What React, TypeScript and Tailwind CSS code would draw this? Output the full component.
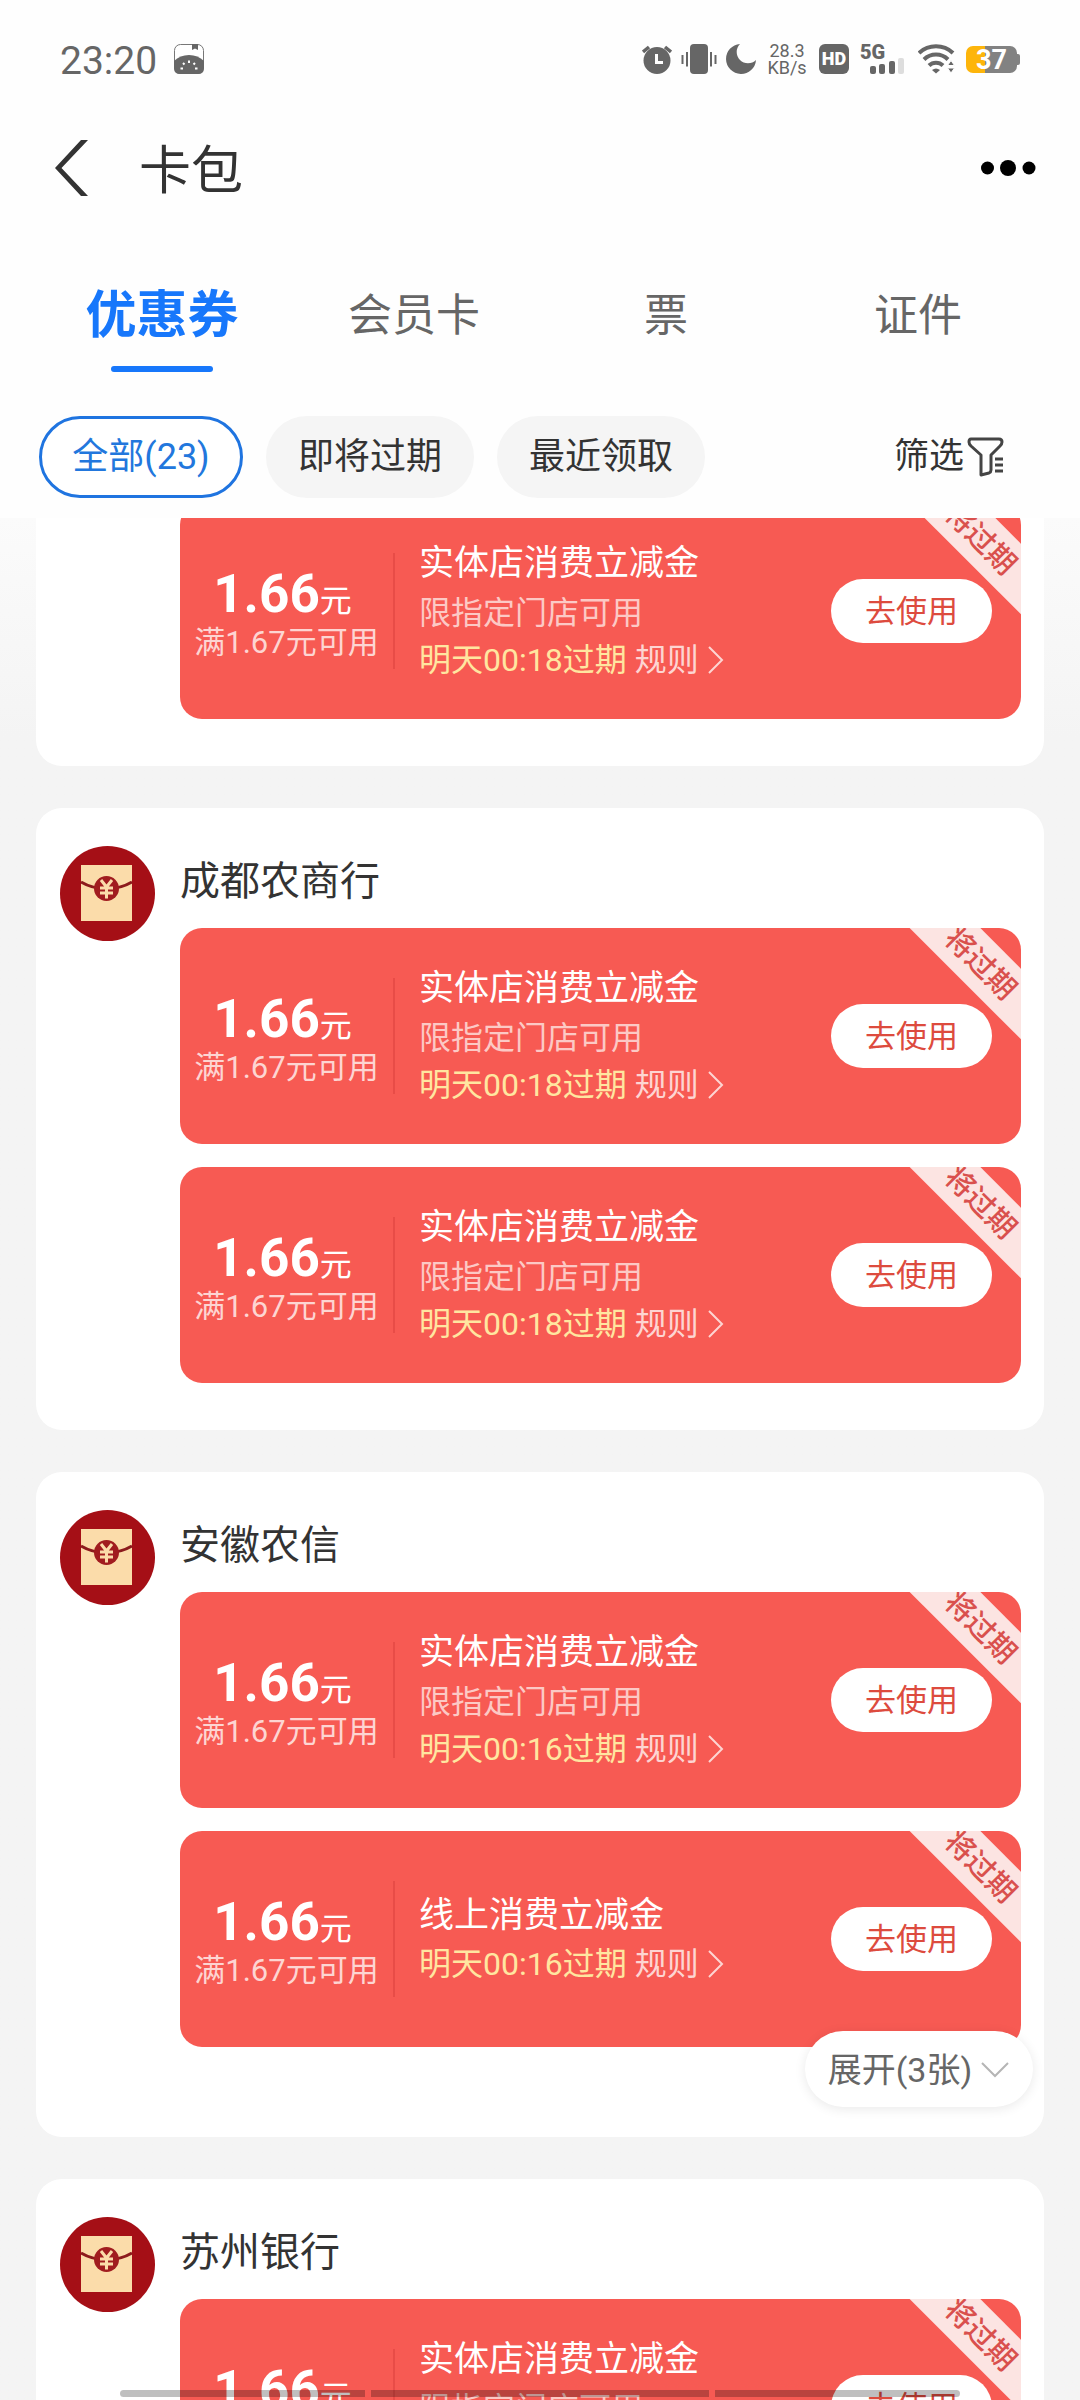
import React from "react";

type Coupon = { title: string; scope?: string; expiry: string };
type Group = { name: string; coupons: Coupon[]; more?: number };

const store = "实体店消费立减金";
const scope = "限指定门店可用";

const groups: Group[] = [
  {
    name: "成都农商行",
    coupons: [
      { title: store, scope, expiry: "明天00:18过期" },
      { title: store, scope, expiry: "明天00:18过期" },
    ],
  },
  {
    name: "安徽农信",
    coupons: [
      { title: store, scope, expiry: "明天00:16过期" },
      { title: "线上消费立减金", expiry: "明天00:16过期" },
    ],
    more: 3,
  },
  { name: "苏州银行", coupons: [{ title: store, scope, expiry: "明天00:16过期" }] },
];

function StatusBar() {
  return (
    <div className="flex h-[118px] shrink-0 items-center justify-between px-[60px] text-[#666]">
      <div className="flex items-center gap-[17px]">
        <span className="pt-[3px] text-[39px] leading-[40px]">23:20</span>
        <svg width="30" height="30" viewBox="0 0 30 30" aria-hidden="true">
          <rect x="0.5" y="0.5" width="29" height="29" rx="6" fill="#fff" stroke="#777" />
          <path d="M0 17C4 13 9 11 15 11S26 13 30 17V24Q30 30 24 30H6Q0 30 0 24Z" fill="#666" />
          <path d="M18 0H24V6L21 4.500L18 6Z" fill="#666" />
          <path d="M15 16.500V19M9 19L10.500 20.500M21 19L19.500 20.500M6.500 24.500H9M21 24.500H23.500" stroke="#fff" strokeWidth="2" />
        </svg>
      </div>
      <div className="flex items-center">
        <svg width="30" height="30" viewBox="0 0 30 30" aria-hidden="true">
          <circle cx="15" cy="16.500" r="13.500" fill="#666" />
          <path d="M1 8L7 3M29 8L23 3" stroke="#666" strokeWidth="3.500" />
          <path d="M14.500 10V18.500H21" stroke="#fff" strokeWidth="3" fill="none" />
        </svg>
        <svg className="ml-[9px]" width="36" height="30" viewBox="0 0 36 30" aria-hidden="true">
          <rect x="9" width="18" height="30" rx="4" fill="#666" />
          <path d="M1.500 11V20M6 8V22.500M30 8V22.500M34.500 11V20" stroke="#666" strokeWidth="2" />
        </svg>
        <svg className="ml-[9px]" width="30" height="30" viewBox="0 0 30 30" aria-hidden="true">
          <path d="M14 0A10.500 10.500 0 0 0 30 16A15 15 0 1 1 14 0Z" fill="#666" />
        </svg>
        <div className="ml-[11px] w-[40px] text-center text-[18px] leading-[17px]">
          <div>28.3</div>
          <div>KB/s</div>
        </div>
        <div className="ml-[12px] flex h-[30px] w-[30px] items-center justify-center rounded-[6px] bg-[#666] text-[18px] leading-[30px] font-black text-white">
          HD
        </div>
        <svg className="-mt-[10px] ml-[11px]" width="46" height="40" viewBox="0 -10 46 40" aria-hidden="true">
          <text x="0" y="15" fontSize="20" fontWeight="900" fill="#666">5G</text>
          <rect x="10" y="22" width="6" height="8" rx="2" fill="#666" />
          <rect x="19" y="20" width="6" height="10" rx="2" fill="#666" />
          <rect x="29" y="17" width="6" height="13" rx="2" fill="#666" />
          <rect x="38" y="14" width="6" height="16" rx="2" fill="#ddd" />
        </svg>
        <svg className="ml-[12px]" width="38" height="30" viewBox="0 0 38 30" aria-hidden="true">
          <g fill="none" stroke="#666" strokeWidth="4">
            <path d="M1 9A25 25 0 0 1 35 9" />
            <path d="M6 15.500A17 17 0 0 1 30 15.500" />
            <path d="M11 21.500A10 10 0 0 1 25 21.500" />
          </g>
          <path d="M18 29.500L14 26Q18 23 22 26Z" fill="#666" />
          <path d="M29.500 21.500L33 16.500L36.500 21.500ZM29.500 24L33 29L36.500 24Z" fill="#666" stroke="#fefefe" strokeWidth="1" />
        </svg>
        <div className="ml-[10px] flex items-center">
          <div className="flex h-[27px] w-[51px] items-center justify-center rounded-[7px] bg-linear-to-r from-[#fdb50b] from-38% to-[#828282] to-38% pt-[2px] text-[27px] leading-[25px] font-bold text-white">
            37
          </div>
          <div className="h-[11px] w-[3px] rounded-r-[2px] bg-[#828282]" />
        </div>
      </div>
    </div>
  );
}

function Avatar() {
  return (
    <svg width="95" height="95" viewBox="0 0 95 95" className="shrink-0" aria-hidden="true">
      <circle cx="47.500" cy="47.500" r="47.500" fill="#a50f16" />
      <rect x="21" y="19" width="51" height="56" fill="#fbdcaa" />
      <path d="M21 36Q32 42.500 46.500 43Q61 42.500 72 36" fill="none" stroke="#8c1a1c" strokeWidth="3" />
      <circle cx="46.500" cy="42.500" r="12.500" fill="#a11c1f" />
      <path d="M41 34L46.500 41L52 34M46.500 41V52.500M40 42H53M40 47H53" fill="none" stroke="#fbdcaa" strokeWidth="3" />
    </svg>
  );
}

function CouponCard({ coupon }: { coupon: Coupon }) {
  return (
    <article className="relative flex h-[216px] items-center overflow-hidden rounded-[22px] bg-[#f75a53] pr-[29px] text-white">
      <div className="w-[213px] shrink-0 text-center whitespace-nowrap">
        <div className="pt-[10px] pr-2 text-[32px] leading-[46px]">
          <span className="text-[53px] font-bold">1.66</span>元
        </div>
        <div className="text-[31px] leading-[38px] text-[#fdd5d2]">满1.67元可用</div>
      </div>
      <div className="h-[116px] w-[2px] shrink-0 bg-[#e84c47]" />
      <div className="min-w-0 flex-1 pb-1 pl-6 text-[32px]">
        <h3 className="pt-[4px] text-[35px] leading-[50px]">{coupon.title}</h3>
        {coupon.scope && <p className="leading-[48px] text-[#fcc9c5]">{coupon.scope}</p>}
        <p className="flex items-center leading-[46px]">
          <span className="text-[#ffe6a0]">{coupon.expiry}</span>
          <a href="#rules" className="ml-2 flex items-center gap-2 text-[#fdd5d2]">
            规则
            <svg width="17" height="28" viewBox="0 0 17 28" aria-hidden="true">
              <path d="M2 1L15 14L2 27" fill="none" stroke="currentColor" strokeWidth="2" />
            </svg>
          </a>
        </p>
      </div>
      <div className="absolute top-[12px] right-[-61px] h-[50px] w-[200px] rotate-45 bg-[#fce4e2] pr-1 text-center text-[29px] leading-[50px] font-medium text-[#d9504d]">
        将过期
      </div>
      <button type="button" className="relative h-[64px] w-[161px] shrink-0 rounded-full bg-white pt-[2px] text-[31px] text-[#dd4b3e]">
        去使用
      </button>
    </article>
  );
}

function GroupCard({ group }: { group: Group }) {
  return (
    <section
      className={
        group.more
          ? "relative flex items-start rounded-[26px] bg-white pt-[38px] pr-[23px] pb-[90px] pl-[24px]"
          : "relative flex items-start rounded-[26px] bg-white pt-[38px] pr-[23px] pb-[47px] pl-[24px]"
      }
    >
      <Avatar />
      <div className="ml-[25px] min-w-0 flex-1">
        <h2 className="h-[82px] text-[40px] leading-[71px] text-[#333]">{group.name}</h2>
        <div className="flex flex-col gap-[23px]">
          {group.coupons.map((c, i) => (
            <CouponCard key={i} coupon={c} />
          ))}
        </div>
      </div>
      {group.more && (
        <button
          type="button"
          className="absolute right-[11px] bottom-[30px] flex h-[76px] w-[228px] items-center justify-center gap-2 rounded-full bg-white pt-[2px] text-[34px] text-[#666] shadow-[0_2px_12px_rgba(0,0,0,0.09)]"
        >
          展开({group.more}张)
          <svg width="30" height="18" viewBox="0 0 30 18" aria-hidden="true">
            <path d="M2 2L15 15L28 2" fill="none" stroke="#b5b5b5" strokeWidth="2" />
          </svg>
        </button>
      )}
    </section>
  );
}

export default function App() {
  const tabs = ["会员卡", "票", "证件"];
  return (
    <div className="relative flex h-screen flex-col overflow-hidden bg-[#fefefe] font-[Roboto,'Noto_Sans_CJK_SC',sans-serif]">
      <StatusBar />
      <header className="flex h-[100px] shrink-0 items-center pr-[44px] pl-[54px]">
        <button type="button" aria-label="返回">
          <svg width="36" height="56" viewBox="0 0 36 56" aria-hidden="true">
            <path d="M27 0H34L7.500 28L34 56H27L1 28Z" fill="#333" />
          </svg>
        </button>
        <h1 className="ml-[49px] flex-1 pt-[8px] text-[52px] leading-[72px] text-[#333]">卡包</h1>
        <button type="button" aria-label="更多">
          <svg width="56" height="16" viewBox="0 0 56 16" aria-hidden="true">
            <circle cx="7.500" cy="8" r="6.500" />
            <circle cx="28" cy="8" r="8" />
            <circle cx="49" cy="8" r="6.500" />
          </svg>
        </button>
      </header>
      <nav className="grid h-[154px] shrink-0 grid-cols-4 px-9 pt-[61px] text-[44px] leading-[74px] text-[#666]">
        <button type="button" className="flex flex-col items-center font-bold text-[#1777fb]">
          <span className="text-[51px]">优惠券</span>
          <span className="mt-[13px] h-[6px] w-[102px] rounded-full bg-[#1777fb]" />
        </button>
        {tabs.map((t) => (
          <button type="button" key={t} className="self-start">
            {t}
          </button>
        ))}
      </nav>
      <div className="flex h-[146px] shrink-0 items-center gap-[23px] pt-[24px] pr-[76px] pl-[39px] text-[36px] text-[#333]">
        <button type="button" className="h-[82px] w-[204px] rounded-full border-[3px] border-[#1f74e0] bg-white text-[#2277dd]">
          全部(23)
        </button>
        <button type="button" className="h-[82px] w-[208px] rounded-full bg-[#f5f5f5]">
          即将过期
        </button>
        <button type="button" className="h-[82px] w-[208px] rounded-full bg-[#f5f5f5]">
          最近领取
        </button>
        <button type="button" className="ml-auto flex items-center gap-[3px] text-[35px]">
          筛选
          <svg width="37" height="40" viewBox="0 0 37 40" aria-hidden="true">
            <path d="M4 2H32Q35 2 35 5Q35 7 33 9L24 18V33Q24 35 22 36L14 38V18L4 9Q2 7 2 5Q2 2 4 2Z" fill="none" stroke="#444" strokeWidth="3" strokeLinejoin="round" />
            <path d="M28 22H36M28 28H36M28 34H36" stroke="#444" strokeWidth="3" />
          </svg>
        </button>
      </div>
      <main className="flex min-h-0 flex-1 flex-col gap-[42px] overflow-y-auto bg-linear-to-b from-[#fbfbfb] to-[#f4f4f4] to-[220px] px-9 [scrollbar-width:none]">
        <section className="shrink-0 rounded-b-[26px] bg-white pr-[23px] pb-[47px] pl-[144px]">
          <div className="-mt-[15px]">
            <CouponCard coupon={{ title: store, scope, expiry: "明天00:18过期" }} />
          </div>
        </section>
        {groups.map((g) => (
          <GroupCard key={g.name} group={g} />
        ))}
      </main>
      <div className="absolute inset-x-[120px] bottom-[3px] flex h-[7px] gap-[6px] overflow-hidden rounded-full">
        <span className="flex-[245] bg-black/25" />
        <span className="flex-[338] bg-black/25" />
        <span className="flex-[245] bg-black/25" />
      </div>
    </div>
  );
}
